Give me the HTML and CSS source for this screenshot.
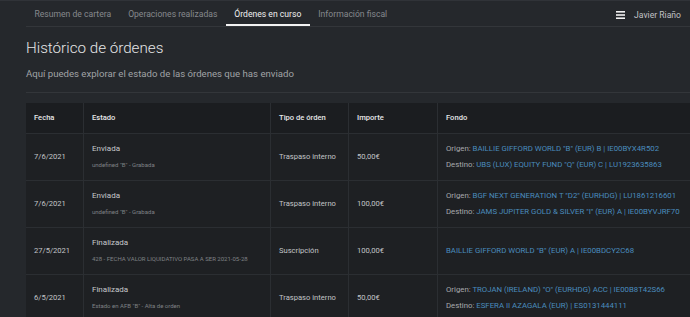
FILE: index.html
```html
<!DOCTYPE html>
<html lang="es">
<head>
    <meta charset="UTF-8">
    <meta name="viewport" content="width=device-width, initial-scale=1.0">
    <title>Órdenes en curso</title>
    <link rel="stylesheet" href="styles.css">
</head>
<body>
    <header class="topbar">
        <nav class="tabs">
            <a class="tab" href="#">Resumen de cartera</a>
            <a class="tab" href="#">Operaciones realizadas</a>
            <a class="tab active" href="#">Órdenes en curso</a>
            <a class="tab" href="#">Información fiscal</a>
        </nav>
        <div class="user">
            <svg class="menu-icon" width="9" height="8" viewBox="0 0 9 8">
                <rect x="0" y="0" width="9" height="1.6" fill="#f2f2f2"/>
                <rect x="0" y="3.2" width="9" height="1.6" fill="#f2f2f2"/>
                <rect x="0" y="6.4" width="9" height="1.6" fill="#f2f2f2"/>
            </svg>
            <span class="user-name">Javier Riaño</span>
        </div>
    </header>

    <main class="content">
        <h1>Histórico de órdenes</h1>
        <p class="intro">Aquí puedes explorar el estado de las órdenes que has enviado</p>

        <table class="orders">
            <thead>
                <tr>
                    <th class="col-date">Fecha</th>
                    <th class="col-status">Estado</th>
                    <th class="col-type">Tipo de órden</th>
                    <th class="col-amount">Importe</th>
                    <th class="col-fund">Fondo</th>
                </tr>
            </thead>
            <tbody>
                <tr>
                    <td>7/6/2021</td>
                    <td>
                        <div class="status">Enviada</div>
                        <div class="status-detail">undefined "B" - Grabada</div>
                    </td>
                    <td>Traspaso interno</td>
                    <td>50,00€</td>
                    <td>
                        <div class="fund-line"><span class="label">Origen:</span> <a href="#">BAILLIE GIFFORD WORLD "B" (EUR) B | IE00BYX4R502</a></div>
                        <div class="fund-line"><span class="label">Destino:</span> <a href="#">UBS (LUX) EQUITY FUND "Q" (EUR) C | LU1923635863</a></div>
                    </td>
                </tr>
                <tr>
                    <td>7/6/2021</td>
                    <td>
                        <div class="status">Enviada</div>
                        <div class="status-detail">undefined "B" - Grabada</div>
                    </td>
                    <td>Traspaso interno</td>
                    <td>100,00€</td>
                    <td>
                        <div class="fund-line"><span class="label">Origen:</span> <a href="#">BGF NEXT GENERATION T "D2" (EURHDG) | LU1861216601</a></div>
                        <div class="fund-line"><span class="label">Destino:</span> <a href="#">JAMS JUPITER GOLD &amp; SILVER "I" (EUR) A | IE00BYVJRF70</a></div>
                    </td>
                </tr>
                <tr>
                    <td>27/5/2021</td>
                    <td>
                        <div class="status">Finalizada</div>
                        <div class="status-detail">428 - FECHA VALOR LIQUIDATIVO PASA A SER 2021-05-28</div>
                    </td>
                    <td>Suscripción</td>
                    <td>100,00€</td>
                    <td>
                        <div class="fund-line"><a href="#">BAILLIE GIFFORD WORLD "B" (EUR) A | IE00BDCY2C68</a></div>
                    </td>
                </tr>
                <tr>
                    <td>6/5/2021</td>
                    <td>
                        <div class="status">Finalizada</div>
                        <div class="status-detail">Estado en AFB "B" - Alta de orden</div>
                    </td>
                    <td>Traspaso interno</td>
                    <td>50,00€</td>
                    <td>
                        <div class="fund-line"><span class="label">Origen:</span> <a href="#">TROJAN (IRELAND) "O" (EURHDG) ACC | IE00B8T42S66</a></div>
                        <div class="fund-line"><span class="label">Destino:</span> <a href="#">ESFERA II AZAGALA (EUR) | ES0131444111</a></div>
                    </td>
                </tr>
            </tbody>
        </table>
    </main>
</body>
</html>
```

FILE: styles.css
```css
body {
    margin: 0;
    padding: 0;
    background-color: #25282c;
    color: #c2c4c7;
    font-family: Roboto, "Liberation Sans", sans-serif;
    border-top: 1px solid #303338;
    overflow: hidden;
    height: 316px;
}
a {
    text-decoration: none;
}
.topbar {
    display: flex;
    justify-content: space-between;
    align-items: stretch;
    height: 25px;
    margin-left: 26px;
    border-bottom: 1px solid #33363a;
}
.tabs {
    display: flex;
}
.tab {
    display: flex;
    align-items: center;
    padding: 2px 8.5px 0;
    font-size: 8.6px;
    color: #85888c;
    border-bottom: 2px solid transparent;
}
.tab.active {
    color: #f0f0f0;
    border-bottom-color: #f2f2f2;
}
.user {
    display: flex;
    align-items: center;
    gap: 9px;
    padding: 2px 9px 0 0;
}
.menu-icon {
    display: block;
}
.user-name {
    font-size: 8.6px;
    color: #c0c2c5;
}
.content {
    padding-left: 26px;
}
h1 {
    margin: 11px 0 0;
    font-size: 15.2px;
    line-height: 20px;
    font-weight: 300;
    color: #e4e5e6;
}
.intro {
    margin: 10px 0 0;
    padding-bottom: 12px;
    font-size: 9.6px;
    line-height: 12px;
    color: #a0a3a6;
    border-bottom: 1px solid #33363a;
}
.orders {
    margin-top: 10px;
    width: 100%;
    border-collapse: collapse;
    background-color: #1e2023;
    font-size: 7.6px;
    table-layout: fixed;
}
.orders th,
.orders td {
    border: 1px solid #2b2e32;
    padding: 7px 8px;
    text-align: left;
    vertical-align: middle;
    line-height: 16px;
    white-space: nowrap;
}
.orders tr > :first-child {
    border-left: none;
}
.orders tr > :last-child {
    border-right: none;
}
.orders thead tr > * {
    border-top: none;
}
.orders th {
    background-color: #1b1d20;
    font-weight: 500;
    color: #e6e7e8;
}
.col-date { width: 41px; }
.col-status { width: 170px; }
.col-type { width: 61px; }
.col-amount { width: 72px; }
.status {
    font-size: 8px;
    color: #c6c8cb;
}
.status-detail {
    font-size: 6px;
    color: #7e8185;
}
.fund-line {
    font-size: 7.8px;
}
.label {
    color: #a7a9ac;
}
.fund-line a {
    color: #4a8cbe;
}
```
